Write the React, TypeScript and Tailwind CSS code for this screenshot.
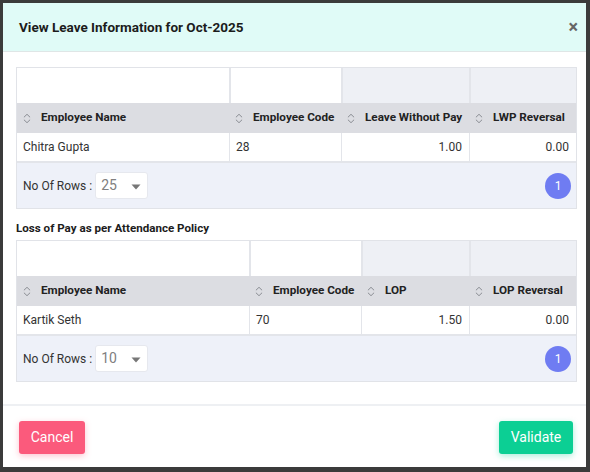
import React from 'react';

type Col = { label: string; width: number; shaded: boolean; align: 'left' | 'right' };

const SortIcon = () => (
  <svg width="8" height="11" viewBox="0 0 8 11" fill="none" className="shrink-0">
    <path d="M1.2 4L4 1.3L6.8 4" stroke="#8a8d93" strokeWidth="1" strokeLinecap="round" strokeLinejoin="round" />
    <path d="M1.2 7L4 9.7L6.8 7" stroke="#8a8d93" strokeWidth="1" strokeLinecap="round" strokeLinejoin="round" />
  </svg>
);

const Caret = () => (
  <svg width="10" height="6" viewBox="0 0 10 6">
    <path d="M0.5 0.5H9.5L5 5.5Z" fill="#777" />
  </svg>
);

const LeaveTable = ({ cols, row, rows }: { cols: Col[]; row: string[]; rows: string }) => {
  const template = cols.map((c) => `${c.width}px`).join(' ');
  return (
    <div className="border border-[#e1e3e8] w-[561px]">
      <div className="grid h-[35px]" style={{ gridTemplateColumns: template }}>
        {cols.map((c, i) => (
          <div
            key={i}
            className={`${c.shaded ? 'bg-[#eef0f5]' : 'bg-white'} ${i > 0 ? 'border-l-2 border-[#e3e5ea]' : ''}`}
          />
        ))}
      </div>
      <div className="grid h-[30px] bg-[#dcdde2]" style={{ gridTemplateColumns: template }}>
        {cols.map((c, i) => (
          <div key={i} className="flex items-center gap-[10px] pl-[6px] text-[11.7px] font-bold text-[#222]">
            <SortIcon />
            <span className="whitespace-nowrap">{c.label}</span>
          </div>
        ))}
      </div>
      <div className="grid h-[30px] bg-white border-b-2 border-[#e3e5ea]" style={{ gridTemplateColumns: template }}>
        {cols.map((c, i) => (
          <div
            key={i}
            className={`flex items-center text-[12px] text-[#333] ${c.align === 'right' ? 'justify-end pr-[7px]' : 'pl-[6px]'} ${i > 0 ? 'border-l border-[#e3e5ea]' : ''}`}
          >
            {row[i]}
          </div>
        ))}
      </div>
      <div className="flex items-center justify-between h-[45px] bg-[#eef1f9] pl-[6px] pr-[5px]">
        <div className="flex items-center gap-[3px] text-[12px] text-[#333]">
          <span>No Of Rows :</span>
          <div className="flex items-center justify-between w-[53px] h-[27px] bg-white border border-[#e6e8ee] rounded-[3px] pl-[5px] pr-[6px] text-[14px] text-[#808080]">
            <span>{rows}</span>
            <span className="mt-[3px]"><Caret /></span>
          </div>
        </div>
        <div className="flex items-center justify-center w-[26px] h-[26px] rounded-full bg-[#6f7cf2] text-white text-[12px]">1</div>
      </div>
    </div>
  );
};

export default function App() {
  const leaveCols: Col[] = [
    { label: 'Employee Name', width: 212, shaded: false, align: 'left' },
    { label: 'Employee Code', width: 112, shaded: false, align: 'left' },
    { label: 'Leave Without Pay', width: 128, shaded: true, align: 'right' },
    { label: 'LWP Reversal', width: 107, shaded: true, align: 'right' },
  ];
  const lopCols: Col[] = [
    { label: 'Employee Name', width: 232, shaded: false, align: 'left' },
    { label: 'Employee Code', width: 112, shaded: false, align: 'left' },
    { label: 'LOP', width: 108, shaded: true, align: 'right' },
    { label: 'LOP Reversal', width: 107, shaded: true, align: 'right' },
  ];

  return (
    <div className="w-[590px] h-[472px] bg-[#3b3b3b] pl-[3px] pt-[3px] pr-[4px] pb-[5px] font-['Roboto',sans-serif]">
      <div className="w-full h-full bg-white flex flex-col">
        <div className="flex items-center justify-between h-[49px] bg-[#e0fbf7] border-b border-[#dfe6e6] pl-[16px] pr-[8px]">
          <h1 className="text-[13.5px] font-bold text-[#1c1c1c]">View Leave Information for Oct-2025</h1>
          <span className="text-[18px] font-bold text-[#666] leading-none">×</span>
        </div>
        <div className="flex-1 pl-[13px] pr-[9px] pt-[15px]">
          <LeaveTable cols={leaveCols} row={['Chitra Gupta', '28', '1.00', '0.00']} rows="25" />
          <div className="mt-[9px] mb-[2px] h-[20px] leading-[20px] text-[11.6px] font-bold text-[#1c1c1c]">
            Loss of Pay as per Attendance Policy
          </div>
          <LeaveTable cols={lopCols} row={['Kartik Seth', '70', '1.50', '0.00']} rows="10" />
        </div>
        <div className="flex items-start justify-between border-t-2 border-[#eef0f3] pt-[15px] pl-[16px] pr-[13px] h-[63px]">
          <button className="w-[66px] h-[33px] rounded-[3px] bg-[#fb5a7c] text-white text-[14px] shadow-[0_2px_6px_rgba(251,90,124,0.35)]">
            Cancel
          </button>
          <button className="w-[74px] h-[33px] rounded-[3px] bg-[#0ccf94] text-white text-[14px] shadow-[0_2px_6px_rgba(12,207,148,0.35)]">
            Validate
          </button>
        </div>
      </div>
    </div>
  );
}
